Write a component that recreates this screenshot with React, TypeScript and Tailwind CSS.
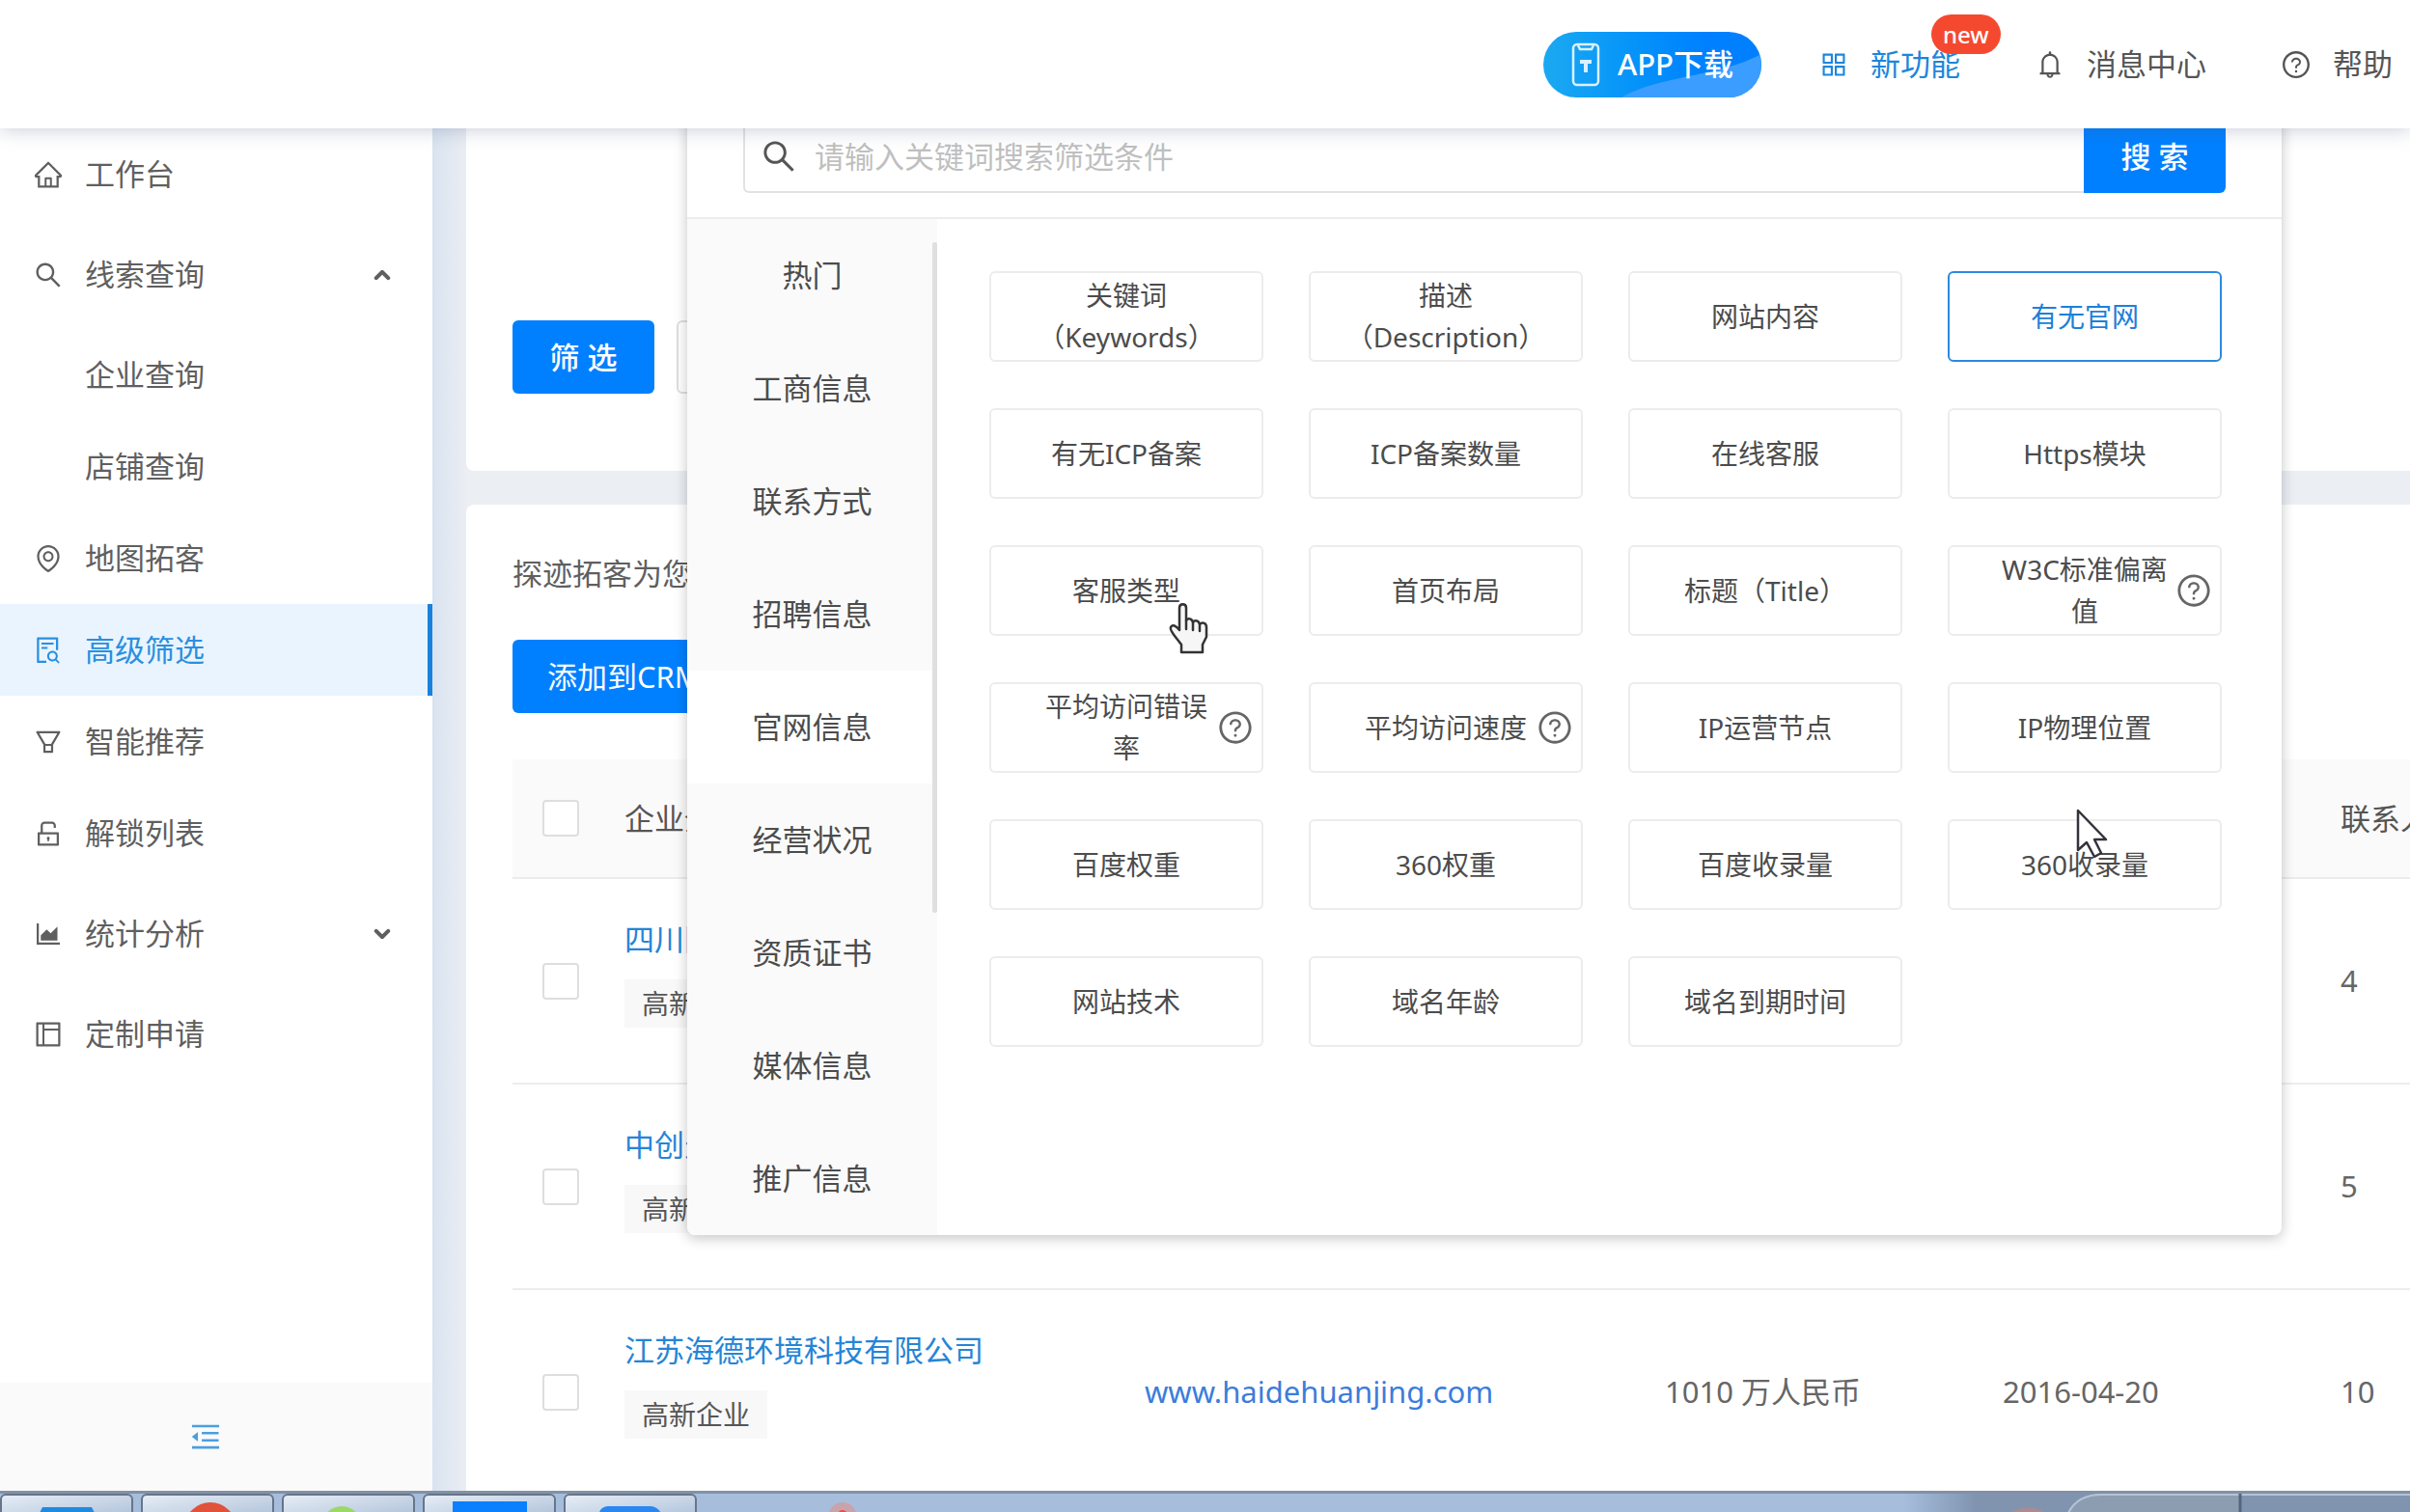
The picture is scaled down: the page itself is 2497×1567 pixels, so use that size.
import type { ReactNode } from 'react';
import type { IconType } from 'react-icons';
import {
  AiOutlineAppstore,
  AiOutlineAreaChart,
  AiOutlineBell,
  AiOutlineEnvironment,
  AiOutlineFileSearch,
  AiOutlineFilter,
  AiOutlineHome,
  AiOutlineLayout,
  AiOutlineMenuFold,
  AiOutlineQuestionCircle,
  AiOutlineSearch,
  AiOutlineUnlock,
} from 'react-icons/ai';
import { ChevronDown, ChevronUp } from 'lucide-react';

interface MenuItem {
  label: string;
  icon?: IconType;
  active?: boolean;
  arrow?: 'up' | 'down';
}

interface FilterOption {
  label: string;
  help?: boolean;
  active?: boolean;
  cursor?: ReactNode;
}

interface Company {
  name: string;
  site?: string;
  capital?: string;
  date?: string;
  contacts: number;
}

const menu: MenuItem[] = [
  { label: '工作台', icon: AiOutlineHome },
  { label: '线索查询', icon: AiOutlineSearch, arrow: 'up' },
  { label: '企业查询' },
  { label: '店铺查询' },
  { label: '地图拓客', icon: AiOutlineEnvironment },
  { label: '高级筛选', icon: AiOutlineFileSearch, active: true },
  { label: '智能推荐', icon: AiOutlineFilter },
  { label: '解锁列表', icon: AiOutlineUnlock },
  { label: '统计分析', icon: AiOutlineAreaChart, arrow: 'down' },
  { label: '定制申请', icon: AiOutlineLayout },
];

const categories = ['热门', '工商信息', '联系方式', '招聘信息', '官网信息', '经营状况', '资质证书', '媒体信息', '推广信息'];

const options: FilterOption[] = [
  { label: '关键词\n（Keywords）' },
  { label: '描述\n（Description）' },
  { label: '网站内容' },
  { label: '有无官网', active: true },
  { label: '有无ICP备案' },
  { label: 'ICP备案数量' },
  { label: '在线客服' },
  { label: 'Https模块' },
  { label: '客服类型', cursor: <HandCursor /> },
  { label: '首页布局' },
  { label: '标题（Title）' },
  { label: 'W3C标准偏离\n值', help: true },
  { label: '平均访问错误\n率', help: true },
  { label: '平均访问速度', help: true },
  { label: 'IP运营节点' },
  { label: 'IP物理位置' },
  { label: '百度权重' },
  { label: '360权重' },
  { label: '百度收录量' },
  { label: '360收录量', cursor: <ArrowCursor /> },
  { label: '网站技术' },
  { label: '域名年龄' },
  { label: '域名到期时间' },
];

const companies: Company[] = [
  { name: '四川阳', contacts: 4 },
  { name: '中创天', contacts: 5 },
  {
    name: '江苏海德环境科技有限公司',
    site: 'www.haidehuanjing.com',
    capital: '1010 万人民币',
    date: '2016-04-20',
    contacts: 10,
  },
];

function HandCursor() {
  return (
    <svg className="absolute left-[184px] top-[58px] z-10 h-[53px] w-[42px]" viewBox="0 0 42 53" fill="none">
      <path
        d="M13 51V43L6 34C3 30 1 27 2 25C4 22 7 23 11 28V5C11 0 18 0 18 5V18C20 15 24 16 25 20C27 17 31 18 32 22C35 19 39 21 39 25V35L35 43V51Z"
        fill="#f6f6f6"
        stroke="#333"
        strokeWidth="2.5"
        strokeLinejoin="round"
      />
      <path d="M18 18V27M25 20V28M32 22V29" stroke="#333" strokeWidth="2.5" strokeLinecap="round" />
    </svg>
  );
}

function ArrowCursor() {
  return (
    <svg className="absolute left-[130px] top-[-14px] z-10 h-[54px] w-[36px]" viewBox="0 0 36 54" fill="none">
      <path
        d="M3 3V44L12 36L20 51L27 47L20 33H32Z"
        fill="#fff"
        stroke="#33333d"
        strokeWidth="2.5"
        strokeLinejoin="round"
      />
    </svg>
  );
}

function Header() {
  return (
    <header className="relative z-20 flex h-[133px] shrink-0 items-center justify-end gap-[77px] bg-white pr-[18px] shadow-[0_2px_18px_rgba(70,85,130,0.28)]">
      <div className="flex items-center gap-[59px]">
        <button className="relative flex h-[68px] items-center gap-[18px] overflow-hidden rounded-full bg-linear-to-r from-[#1ba9f2] to-[#0080ff] to-75% px-[29px] text-[31px] font-medium text-white">
          <svg className="absolute right-0 bottom-0 h-[45px] w-[145px]" viewBox="0 0 145 45" preserveAspectRatio="none">
            <path d="M0 45C40 22 100 24 145 0V45Z" fill="#3a9dff" />
          </svg>
          <svg className="relative h-[46px] w-[30px]" viewBox="0 0 30 46" fill="none" stroke="#d9f1ff" strokeWidth="2.5">
            <rect x="2" y="2" width="26" height="42" rx="4" />
            <path d="M7 3L9 7H21L23 3" />
            <path d="M9 20H21M15 20V31" strokeWidth="4" />
          </svg>
          <span className="relative">APP下载</span>
        </button>
        <a href="#new" className="relative flex items-center gap-[22px] text-[31px] text-[#1c86dc]">
          <AiOutlineAppstore className="size-8" />
          新功能
          <span className="absolute -top-[28px] left-[117px] flex h-[41px] items-center rounded-full bg-[#f5492f] px-3 text-2xl font-medium text-white">
            new
          </span>
        </a>
      </div>
      <a href="#message" className="flex items-center gap-[22px] text-[31px] text-[#555]">
        <AiOutlineBell className="size-8" />
        消息中心
      </a>
      <a href="#help" className="flex items-center gap-[22px] text-[31px] text-[#555]">
        <AiOutlineQuestionCircle className="size-8" />
        帮助
      </a>
    </header>
  );
}

function Sidebar() {
  return (
    <aside className="flex w-[448px] shrink-0 flex-col bg-white">
      <nav className="flex-1">
        {menu.map(({ label, icon: Icon, active, arrow }) => (
          <a
            key={label}
            href="#menu"
            className={`flex h-[95px] items-center gap-[22px] pr-[42px] pl-[34px] text-[31px] ${arrow ? 'my-[9px]' : ''} ${
              active ? 'border-r-[5px] border-[#1a80dc] bg-[#e9f4fe] text-[#2a8fdf]' : 'text-[#5f5f5f]'
            }`}
          >
            <span className="size-8 shrink-0">{Icon && <Icon className="size-8" />}</span>
            <span className="flex-1">{label}</span>
            {arrow === 'up' && <ChevronUp className="size-5 scale-125" strokeWidth={4} />}
            {arrow === 'down' && <ChevronDown className="size-5 scale-125" strokeWidth={4} />}
          </a>
        ))}
      </nav>
      <div className="flex h-28 items-center justify-center bg-[#fafafa] pr-[22px]">
        <button aria-label="收起菜单" className="text-[#4a9fe0]">
          <AiOutlineMenuFold className="size-9" />
        </button>
      </div>
    </aside>
  );
}

function FilterPanel() {
  return (
    <section className="absolute top-[-46px] right-[133px] left-[264px] z-10 rounded-lg bg-white shadow-[0_3px_14px_rgba(0,0,0,0.24)]">
      <div className="flex border-b-2 border-[#ececec] px-[58px] pt-[37px] pb-[25px]">
        <label className="flex h-[76px] flex-1 items-center gap-[17px] rounded-l-md border-2 border-r-0 border-[#e2e2e2] px-[15px]">
          <AiOutlineSearch className="size-10 shrink-0 text-[#555]" />
          <input
            type="text"
            aria-label="筛选条件"
            placeholder="请输入关键词搜索筛选条件"
            className="w-full text-[31px] outline-none placeholder:text-[#bfbfbf]"
          />
        </label>
        <button className="w-[147px] rounded-r-md bg-[#0080ff] text-[31px] font-medium text-white">搜 索</button>
      </div>
      <div className="flex">
        <div className="relative w-[259px] shrink-0 overflow-hidden rounded-bl-lg bg-[#fafafa]">
          {categories.map((item) => (
            <button
              key={item}
              className={`block h-[117px] w-full text-[31px] text-[#4c4c4c] ${item === '官网信息' ? 'bg-white' : ''}`}
            >
              {item}
            </button>
          ))}
          {/* scroll thumb */}
          <div className="absolute top-6 right-0 h-[695px] w-[5px] rounded-full bg-[#dfdfdf]" />
        </div>
        <div className="grid flex-1 auto-rows-[94px] grid-cols-4 gap-x-[47px] gap-y-12 pt-[54px] pr-[62px] pl-[54px]">
          {options.map((option) => (
            <button
              key={option.label}
              className={`relative flex items-center justify-center rounded-md border-2 text-[28px] leading-[43px] whitespace-pre-line ${
                option.active ? 'border-[#2a8ade] text-[#1c80d8]' : 'border-[#ececec] text-[#4c4c4c]'
              }`}
            >
              {option.label}
              {option.help && <AiOutlineQuestionCircle className="absolute right-2 size-[38px] text-[#666]" />}
              {option.cursor}
            </button>
          ))}
        </div>
      </div>
    </section>
  );
}

function Checkbox({ label }: { label: string }) {
  return (
    <input
      type="checkbox"
      aria-label={label}
      className="ml-[31px] block size-[38px] appearance-none rounded-sm border-2 border-[#dedede] bg-white"
    />
  );
}

function CompanyTable() {
  return (
    <table className="mt-12 w-full min-w-[2030px] table-fixed border-separate border-spacing-0 text-left text-[31px] text-[#666]">
      <colgroup>
        <col className="w-[91px]" />
        <col className="w-[539px]" />
        <col className="w-[539px]" />
        <col className="w-[350px]" />
        <col className="w-[350px]" />
        <col />
      </colgroup>
      <thead>
        <tr className="h-[124px] bg-[#fafafa] text-[#555]">
          <th className="border-b-2 border-[#ebebeb]">
            <Checkbox label="全选" />
          </th>
          <th className="border-b-2 border-[#ebebeb] px-[25px] font-normal">企业全称</th>
          <th className="border-b-2 border-[#ebebeb]" />
          <th className="border-b-2 border-[#ebebeb]" />
          <th className="border-b-2 border-[#ebebeb]" />
          <th className="border-b-2 border-[#ebebeb] px-[25px] font-normal whitespace-nowrap">联系人</th>
        </tr>
      </thead>
      <tbody>
        {companies.map((company) => (
          <tr key={company.name} className="h-[213px]">
            <td className="border-b-2 border-[#ededed]">
              <Checkbox label={company.name} />
            </td>
            <td className="border-b-2 border-[#ededed] px-[25px] pb-[18px]">
              <a href="#company" className="block leading-[47px] text-[#2585d6]">
                {company.name}
              </a>
              <span className="mt-[18px] inline-block bg-[#f8f8f8] px-[18px] text-[28px] leading-[50px] text-[#555]">
                高新企业
              </span>
            </td>
            <td className="border-b-2 border-[#ededed] px-[25px]">
              {company.site && (
                <a href="#site" className="text-[#3b7ddb]">
                  {company.site}
                </a>
              )}
            </td>
            <td className="border-b-2 border-[#ededed] px-[25px]">{company.capital}</td>
            <td className="border-b-2 border-[#ededed] px-[25px]">{company.date}</td>
            <td className="border-b-2 border-[#ededed] px-[25px]">{company.contacts}</td>
          </tr>
        ))}
      </tbody>
    </table>
  );
}

const taskIcons = [
  <path key="a" d="M36 24L42 12H93L99 24Z" fill="#1d8be0" />,
  <circle key="b" cx="70" cy="34" r="27" fill="#e0523a" />,
  <circle key="c" cx="60" cy="31" r="20" fill="#9bd866" />,
  <rect key="d" x="29" y="6" width="77" height="20" fill="#0a80ff" />,
  <path key="e" d="M34 22C35 14 38 11 46 11H86C94 11 97 14 101 22Z" fill="#2a86f0" />,
];

function Taskbar() {
  return (
    <footer className="relative z-20 flex h-[22px] shrink-0 justify-between overflow-hidden border-t-[3px] border-[#8291a6] bg-linear-to-r from-[#a6bedc] from-79% to-[#8094b0] to-82%">
      <div className="flex gap-2">
        {taskIcons.map((icon, idx) => (
          <button
            key={idx}
            aria-label={`任务 ${idx + 1}`}
            className="h-7 w-[138px] overflow-hidden rounded-t-md border-2 border-[#66758a] bg-linear-to-br from-[#e6edf6] to-[#adc0d8]"
          >
            <svg className="h-6 w-full" viewBox="0 0 134 24" preserveAspectRatio="xMinYMin slice">
              {icon}
            </svg>
          </button>
        ))}
        <svg className="ml-[127px] h-5 w-8" viewBox="0 0 32 20">
          <circle cx="16" cy="24" r="15" fill="#c9a3ac" />
          <circle cx="16" cy="22" r="5" fill="#f04a45" />
        </svg>
      </div>
      <svg className="h-5 w-[420px]" viewBox="0 0 420 20" fill="none">
        <ellipse cx="24" cy="20" rx="16" ry="5" fill="#b08a8c" />
        <path d="M66 20C72 8 82 1 100 1H244V20Z" fill="#8c9db2" />
        <path d="M66 20C72 8 82 1 100 1H420" stroke="#b5c4d4" strokeWidth="2" />
        <path d="M244 0V20" stroke="#526681" strokeWidth="3" />
      </svg>
    </footer>
  );
}

export default function App() {
  return (
    <div
      lang="zh-CN"
      className="flex h-screen flex-col overflow-hidden bg-white font-['Noto_Sans','Noto_Sans_CJK_SC',sans-serif]"
    >
      <Header />
      <div className="flex min-h-0 flex-1">
        <Sidebar />
        <main className="relative flex min-w-0 flex-1 flex-col gap-[35px] overflow-hidden bg-[linear-gradient(to_right,#d9e3f0,#ebeef3_36px)] pl-[35px]">
          <section className="flex shrink-0 gap-[23px] rounded-bl-lg bg-white pt-[199px] pb-20 pl-12">
            <button className="h-[76px] w-[147px] rounded-md bg-[#0080ff] text-[31px] font-medium text-white">筛 选</button>
            <button className="h-[76px] w-[147px] rounded-md border-2 border-[#dedede] text-[31px] text-[#5f5f5f]">重 置</button>
          </section>
          <section className="min-h-0 flex-1 overflow-hidden rounded-tl-lg bg-white pt-12 pl-12">
            <p className="text-[31px] leading-[47px] text-[#5f5f5f]">探迹拓客为您</p>
            <button className="mt-[45px] block h-[76px] rounded-md bg-[#0080ff] px-9 text-[31px] text-white">
              添加到CRM
            </button>
            <CompanyTable />
          </section>
          <FilterPanel />
        </main>
      </div>
      <Taskbar />
    </div>
  );
}
